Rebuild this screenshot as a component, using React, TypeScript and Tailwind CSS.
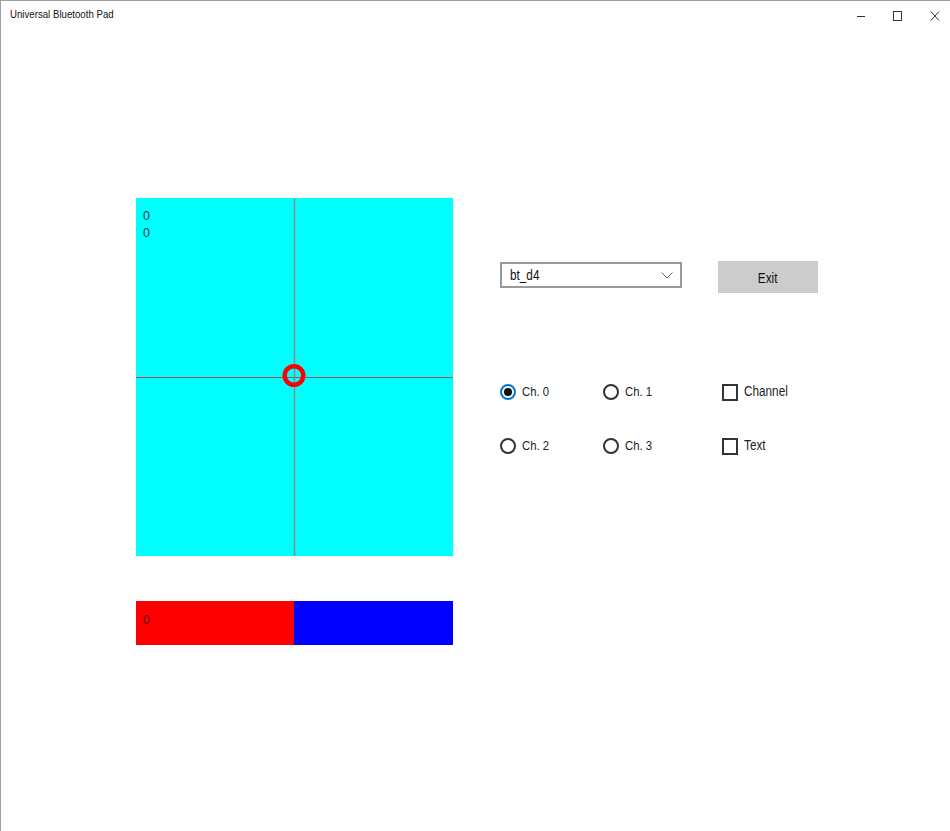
import * as React from 'react';

const font = { fontFamily: '"Liberation Sans", Arial, sans-serif' };

// the reference text is a narrow face; squeeze Liberation Sans to match widths
function Narrow({ children, className = '' }: { children: React.ReactNode; className?: string }) {
  return <span className={`inline-block origin-left scale-x-[0.84] ${className}`}>{children}</span>;
}

function Radio({ label, checked }: { label: string; checked?: boolean }) {
  return (
    <div className="flex h-[20px] items-center gap-[6px]">
      {checked ? (
        <span className="flex h-[16px] w-[16px] items-center justify-center rounded-full border-[2px] border-[#0078d7]">
          <span className="h-[8px] w-[8px] rounded-full bg-[#111]" />
        </span>
      ) : (
        <span className="h-[16px] w-[16px] rounded-full border-[2px] border-[#333]" />
      )}
      <Narrow className="text-[13.5px] text-[#222]">{label}</Narrow>
    </div>
  );
}

function Check({ label }: { label: string }) {
  return (
    <div className="flex h-[20px] items-center gap-[6px]">
      <span className="h-[17px] w-[16px] border-[2px] border-[#333]" />
      <Narrow className="mb-[2px] text-[14px] text-[#222]">{label}</Narrow>
    </div>
  );
}

function TitleBar() {
  return (
    <div className="flex h-[30px] items-center justify-between">
      <Narrow className="ml-[9px] pb-[3px] text-[11.5px] text-[#111]">Universal Bluetooth Pad</Narrow>
      <div className="flex h-full items-center">
        <span className="flex h-full w-[37px] items-center justify-center pl-[6px]">
          <svg width="10" height="10" viewBox="0 0 10 10">
            <path d="M1 5.5h8" stroke="#333" strokeWidth="1" />
          </svg>
        </span>
        <span className="flex h-full w-[37px] items-center justify-center pl-[6px]">
          <svg width="10" height="10" viewBox="0 0 10 10">
            <rect x="0.5" y="0.5" width="8" height="9" fill="none" stroke="#333" strokeWidth="1" />
          </svg>
        </span>
        <span className="flex h-full w-[37px] items-center justify-center pl-[6px]">
          <svg width="10" height="10" viewBox="0 0 10 10">
            <path d="M1 0.5l8 9M9 0.5l-8 9" stroke="#333" strokeWidth="1" />
          </svg>
        </span>
      </div>
    </div>
  );
}

function Pad() {
  return (
    <div className="relative h-[358px] w-[317px] bg-[#00ffff]">
      <svg className="absolute inset-0" width="317" height="358" viewBox="0 0 317 358">
        <line x1="158.5" y1="0" x2="158.5" y2="358" stroke="#8a8a8a" strokeWidth="1.5" />
        <line x1="0" y1="179.5" x2="317" y2="179.5" stroke="#a85050" strokeWidth="1.2" />
        <circle cx="158" cy="177.5" r="9.3" fill="none" stroke="#ff0000" strokeWidth="4.5" />
      </svg>
      <div className="relative flex flex-col pl-[7px] pt-[10px] text-[12.5px] leading-[16.5px] text-[#0f3b3b]">
        <span>0</span>
        <span>0</span>
      </div>
    </div>
  );
}

export default function App() {
  return (
    <div className="flex h-[831px] w-[950px] flex-col border-l border-t border-[#a0a0a0] bg-white" style={font}>
      <TitleBar />
      <div className="flex pl-[135px] pt-[167px]">
        <div className="flex flex-col">
          <Pad />
          <div className="mt-[45px] flex h-[44px] w-[317px]">
            <div className="flex w-[158px] items-start bg-[#ff0000] pl-[7px] pt-[10px] text-[12.5px] text-[#5a0000]">0</div>
            <div className="flex-1 bg-[#0000ff]" />
          </div>
        </div>

        <div className="ml-[47px] flex flex-col">
          <div className="mt-[63px] flex items-start">
            <div className="mt-[1px] flex h-[26px] w-[182px] items-center justify-between border-[2px] border-[#9a9a9a] pl-[8px] pr-[7px]">
              <Narrow className="text-[14px] text-[#111]">bt_d4</Narrow>
              <svg width="12" height="7" viewBox="0 0 12 7">
                <path d="M0.5 0.5l5.5 5.5 5.5-5.5" fill="none" stroke="#666" strokeWidth="1" />
              </svg>
            </div>
            <button className="ml-[36px] flex h-[32px] w-[100px] items-center justify-center bg-[#cccccc] pt-[2px] text-[14px] text-[#111]">
              <span className="inline-block scale-x-[0.84]">Exit</span>
            </button>
          </div>

          <div className="mt-[89px] grid grid-cols-[103px_119px_auto] gap-y-[34px]">
            <Radio label="Ch. 0" checked />
            <Radio label="Ch. 1" />
            <Check label="Channel" />
            <Radio label="Ch. 2" />
            <Radio label="Ch. 3" />
            <Check label="Text" />
          </div>
        </div>
      </div>
    </div>
  );
}
